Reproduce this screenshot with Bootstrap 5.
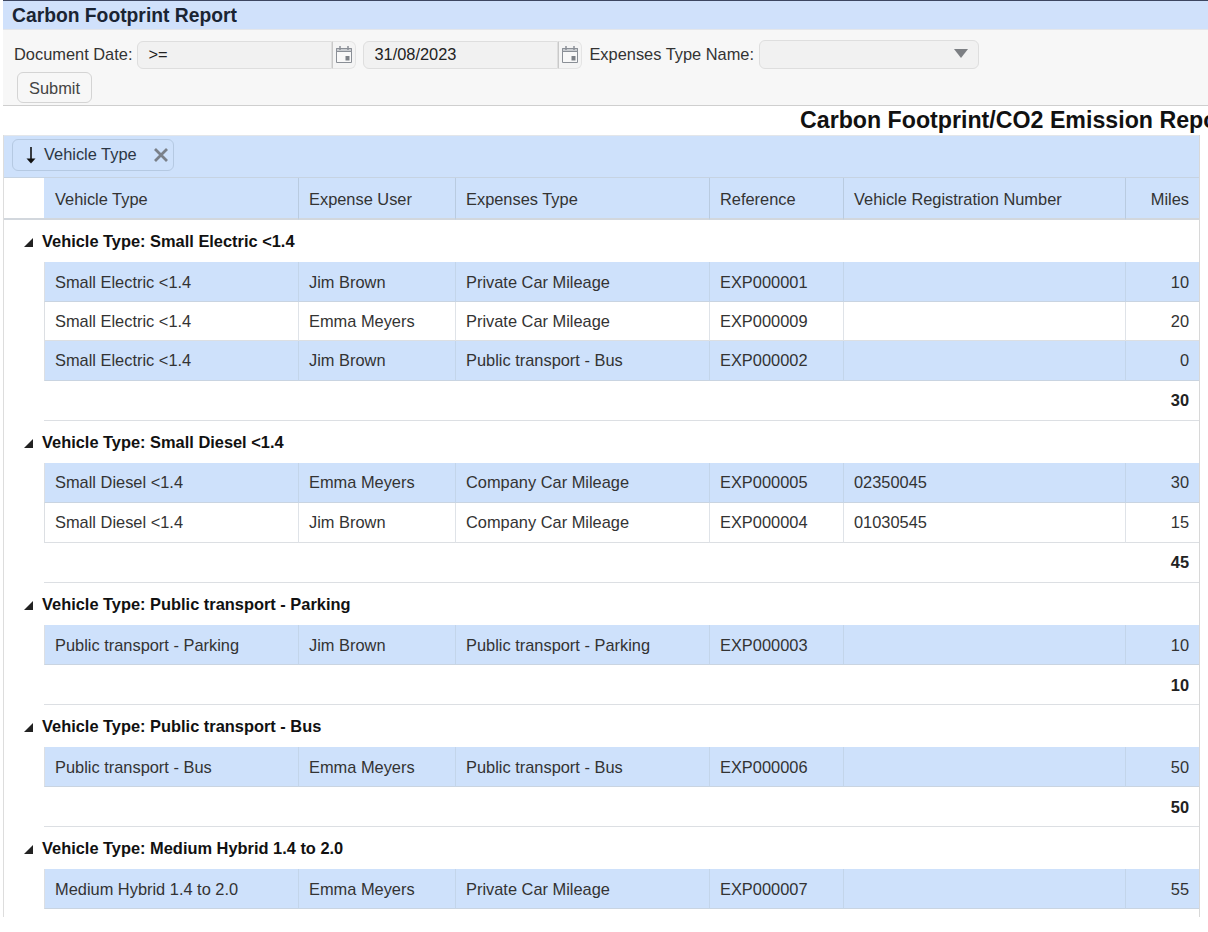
<!DOCTYPE html>
<html lang="en">
<head>
<meta charset="utf-8">
<title>Carbon Footprint Report</title>
<link href="https://cdn.jsdelivr.net/npm/bootstrap@5.3.0/dist/css/bootstrap.min.css" rel="stylesheet">
<style>
html,body{height:100%;overflow:hidden;background:#fff}
body{font-family:"Liberation Sans",Arial,sans-serif;font-size:16.4px;color:#333;line-height:1.25}
.page-frame{margin-left:3px;height:917px;overflow:hidden}
.title-bar{height:30px;background:#d0e1fb;border-top:1px solid #3d4660;border-bottom:1px solid #e4e6ea;padding-left:9px;font-size:19.3px;font-weight:700;color:#1a2433;line-height:29px}
.filter-panel{height:76px;background:#f7f7f7;border-bottom:1px solid #cfcfcf;padding:10px 0 0 11px}
.filter-row{height:29px;gap:5px}
.field-box{height:28px;background:#f1f1f1;border:1px solid #dedede;border-radius:6px 0 0 6px;padding-left:10px;line-height:24px;color:#222}
.field-date{width:195px}
.cal-btn{width:24px;height:28px;border:1px solid #e4e4e4;border-left:1px solid #c9c9c9;border-radius:0 6px 6px 0;background:#f4f4f4;margin-left:-5px}
.cal-gap{margin-right:2px}
.type-select{width:220px;height:29px;background:#f1f1f1;border:1px solid #dedede;border-radius:6px;padding:8px 10px 0 0}
.btn-submit{--bs-btn-font-size:16.4px;--bs-btn-color:#444;--bs-btn-bg:#f7f7f7;--bs-btn-border-color:#d4d4d4;--bs-btn-hover-bg:#eee;--bs-btn-hover-border-color:#ccc;--bs-btn-hover-color:#333;--bs-btn-padding-x:11px;--bs-btn-padding-y:2px;--bs-btn-border-radius:6px;height:31px;margin:3px 0 0 3px;line-height:20px}
.report-title{height:29px;padding-left:797px;font-size:23.2px;font-weight:700;color:#111;line-height:29px;white-space:nowrap;overflow:hidden;width:1205px}
.table-frame{width:1197px;border-left:1px solid #ddd;border-right:1px solid #d8d8d8}
.group-panel{height:43px;background:#cee1fb;border-top:1px solid #e3e6ea;border-bottom:1px solid #c6d3e2;padding:3px 0 0 8px}
.group-chip{width:162px;height:32px;border:1px solid #b5c9e2;border-radius:6px;padding-left:12px;gap:7px;color:#2b3644;white-space:nowrap}
.chip-label{padding-bottom:2px}
.chip-close{margin-left:9px;flex:none}
.table.report-grid{table-layout:fixed;width:1195px;margin:0;border-collapse:separate;border-spacing:0;--bs-table-bg:transparent;--bs-table-color:#333}
.table.report-grid>*>*>*{padding:0 10px;vertical-align:middle;border-width:0;box-shadow:none;font-size:16.4px;line-height:20px;color:#333;overflow:hidden;white-space:nowrap}
.table.report-grid>thead>.head-row>th{height:42px;font-weight:400;background:#cee1fb;border-right:1px solid #b9cbe0;border-bottom:2px solid #d2d7dd;padding-top:2px}
.table.report-grid>thead>.head-row>th:first-child{background:#fff;border-right:0}
.table.report-grid>thead>.head-row>th:nth-child(2){padding-left:11px}
.table.report-grid>thead>.head-row>th:last-child{border-right:0}
.table.report-grid>tbody>.group-row>td{height:42px;padding-left:21px;font-weight:700;color:#111;background:#fff}
.tri{margin-right:9px;margin-left:-1px;vertical-align:0}
.table.report-grid>tbody>.data-row>td{height:40px;border-right:1px solid #dfe3e8;border-bottom:1px solid #dcdfe3}
.table.report-grid>tbody>.data-row>td:last-child{border-right:0}
.table.report-grid>tbody>.data-row>td:first-child{border-right:0;border-bottom:0;background:#fff}
.table.report-grid>tbody>.data-row>td:nth-child(2){border-left:1px solid #dcdfe3}
.table.report-grid>tbody>.row-short>td{height:39px}
.table.report-grid>tbody>.row-tint>td:not(:first-child){background:#cee1fb;border-right-color:#c3d5ea;border-bottom-color:#c9d4e1}
.table.report-grid>tbody>.sum-row>td{height:40px;background:#fff;font-weight:700;color:#222;border-bottom:1px solid #dcdfe3}
.table.report-grid>tbody>.sum-row>td:first-child{border-bottom:0}
.table.report-grid>tbody>.row-lift>td{padding-bottom:2px}
.table.report-grid .num-cell{text-align:right}
</style>
</head>
<body>
<div class="page-frame">
  <div class="title-bar">Carbon Footprint Report</div>
  <form class="filter-panel">
    <div class="filter-row d-flex align-items-center">
      <span>Document Date:</span>
      <div class="field-box field-date">&gt;=</div>
      <div class="cal-btn d-flex align-items-center justify-content-center cal-gap">
        <svg width="18" height="19" viewBox="0 0 18 19" fill="none"><path d="M1.5 3.5h15v14h-15z" stroke="#8a8f96" fill="#f8f8f8"/><path d="M1.5 3.5h15v3h-15z" fill="#c9ccd0" stroke="#8a8f96"/><path d="M5 1v4M13 1v4" stroke="#8a8f96" stroke-width="1.5"/><rect x="10.5" y="11" width="4" height="4.5" fill="#7d8187"/></svg>
      </div>
      <div class="field-box field-date">31/08/2023</div>
      <div class="cal-btn d-flex align-items-center justify-content-center cal-gap">
        <svg width="18" height="19" viewBox="0 0 18 19" fill="none"><path d="M1.5 3.5h15v14h-15z" stroke="#8a8f96" fill="#f8f8f8"/><path d="M1.5 3.5h15v3h-15z" fill="#c9ccd0" stroke="#8a8f96"/><path d="M5 1v4M13 1v4" stroke="#8a8f96" stroke-width="1.5"/><rect x="10.5" y="11" width="4" height="4.5" fill="#7d8187"/></svg>
      </div>
      <span>Expenses Type Name:</span>
      <div class="type-select d-flex justify-content-end">
        <svg width="14" height="9" viewBox="0 0 14 9"><path d="M0 0h14L7 9z" fill="#7c7f83"/></svg>
      </div>
    </div>
    <button type="button" class="btn btn-submit">Submit</button>
  </form>
  <div class="report-title">Carbon Footprint/CO2 Emission Report</div>
  <div class="table-frame">
    <div class="group-panel">
      <div class="group-chip d-flex align-items-center">
        <svg width="12" height="17" viewBox="0 0 12 17"><path d="M6 0v13" stroke="#111" stroke-width="1.6"/><path d="M1.5 11.5h9L6 16.5z" fill="#111"/></svg>
        <span class="chip-label">Vehicle Type</span>
        <svg class="chip-close" width="16" height="16" viewBox="0 0 16 16"><path d="M2 2l12 12M14 2L2 14" stroke="#7a8089" stroke-width="2.8"/></svg>
      </div>
    </div>
    <table class="table report-grid">
      <colgroup><col style="width:40px"><col style="width:255px"><col style="width:157px"><col style="width:254px"><col style="width:134px"><col style="width:282px"><col style="width:73px"></colgroup>
      <thead>
        <tr class="head-row"><th></th><th>Vehicle Type</th><th>Expense User</th><th>Expenses Type</th><th>Reference</th><th>Vehicle Registration Number</th><th class="num-cell">Miles</th></tr>
      </thead>
      <tbody>
        <tr class="group-row"><td colspan="7"><svg class="tri" width="9" height="9" viewBox="0 0 9 9"><path d="M9 0v9H0z" fill="#222"/></svg>Vehicle Type: Small Electric &lt;1.4</td></tr>
        <tr class="data-row row-tint"><td></td><td>Small Electric &lt;1.4</td><td>Jim Brown</td><td>Private Car Mileage</td><td>EXP000001</td><td></td><td class="num-cell">10</td></tr>
        <tr class="data-row row-short"><td></td><td>Small Electric &lt;1.4</td><td>Emma Meyers</td><td>Private Car Mileage</td><td>EXP000009</td><td></td><td class="num-cell">20</td></tr>
        <tr class="data-row row-tint row-lift"><td></td><td>Small Electric &lt;1.4</td><td>Jim Brown</td><td>Public transport - Bus</td><td>EXP000002</td><td></td><td class="num-cell">0</td></tr>
        <tr class="sum-row row-lift"><td></td><td colspan="5"></td><td class="num-cell">30</td></tr>

        <tr class="group-row"><td colspan="7"><svg class="tri" width="9" height="9" viewBox="0 0 9 9"><path d="M9 0v9H0z" fill="#222"/></svg>Vehicle Type: Small Diesel &lt;1.4</td></tr>
        <tr class="data-row row-tint row-lift"><td></td><td>Small Diesel &lt;1.4</td><td>Emma Meyers</td><td>Company Car Mileage</td><td>EXP000005</td><td>02350045</td><td class="num-cell">30</td></tr>
        <tr class="data-row row-lift"><td></td><td>Small Diesel &lt;1.4</td><td>Jim Brown</td><td>Company Car Mileage</td><td>EXP000004</td><td>01030545</td><td class="num-cell">15</td></tr>
        <tr class="sum-row row-lift"><td></td><td colspan="5"></td><td class="num-cell">45</td></tr>

        <tr class="group-row"><td colspan="7"><svg class="tri" width="9" height="9" viewBox="0 0 9 9"><path d="M9 0v9H0z" fill="#222"/></svg>Vehicle Type: Public transport - Parking</td></tr>
        <tr class="data-row row-tint"><td></td><td>Public transport - Parking</td><td>Jim Brown</td><td>Public transport - Parking</td><td>EXP000003</td><td></td><td class="num-cell">10</td></tr>
        <tr class="sum-row"><td></td><td colspan="5"></td><td class="num-cell">10</td></tr>

        <tr class="group-row"><td colspan="7"><svg class="tri" width="9" height="9" viewBox="0 0 9 9"><path d="M9 0v9H0z" fill="#222"/></svg>Vehicle Type: Public transport - Bus</td></tr>
        <tr class="data-row row-tint"><td></td><td>Public transport - Bus</td><td>Emma Meyers</td><td>Public transport - Bus</td><td>EXP000006</td><td></td><td class="num-cell">50</td></tr>
        <tr class="sum-row"><td></td><td colspan="5"></td><td class="num-cell">50</td></tr>

        <tr class="group-row"><td colspan="7"><svg class="tri" width="9" height="9" viewBox="0 0 9 9"><path d="M9 0v9H0z" fill="#222"/></svg>Vehicle Type: Medium Hybrid 1.4 to 2.0</td></tr>
        <tr class="data-row row-tint"><td></td><td>Medium Hybrid 1.4 to 2.0</td><td>Emma Meyers</td><td>Private Car Mileage</td><td>EXP000007</td><td></td><td class="num-cell">55</td></tr>
        <tr class="sum-row"><td></td><td colspan="5"></td><td class="num-cell"></td></tr>
      </tbody>
    </table>
  </div>
</div>
<script src="https://cdn.jsdelivr.net/npm/bootstrap@5.3.0/dist/js/bootstrap.bundle.min.js"></script>
</body>
</html>
